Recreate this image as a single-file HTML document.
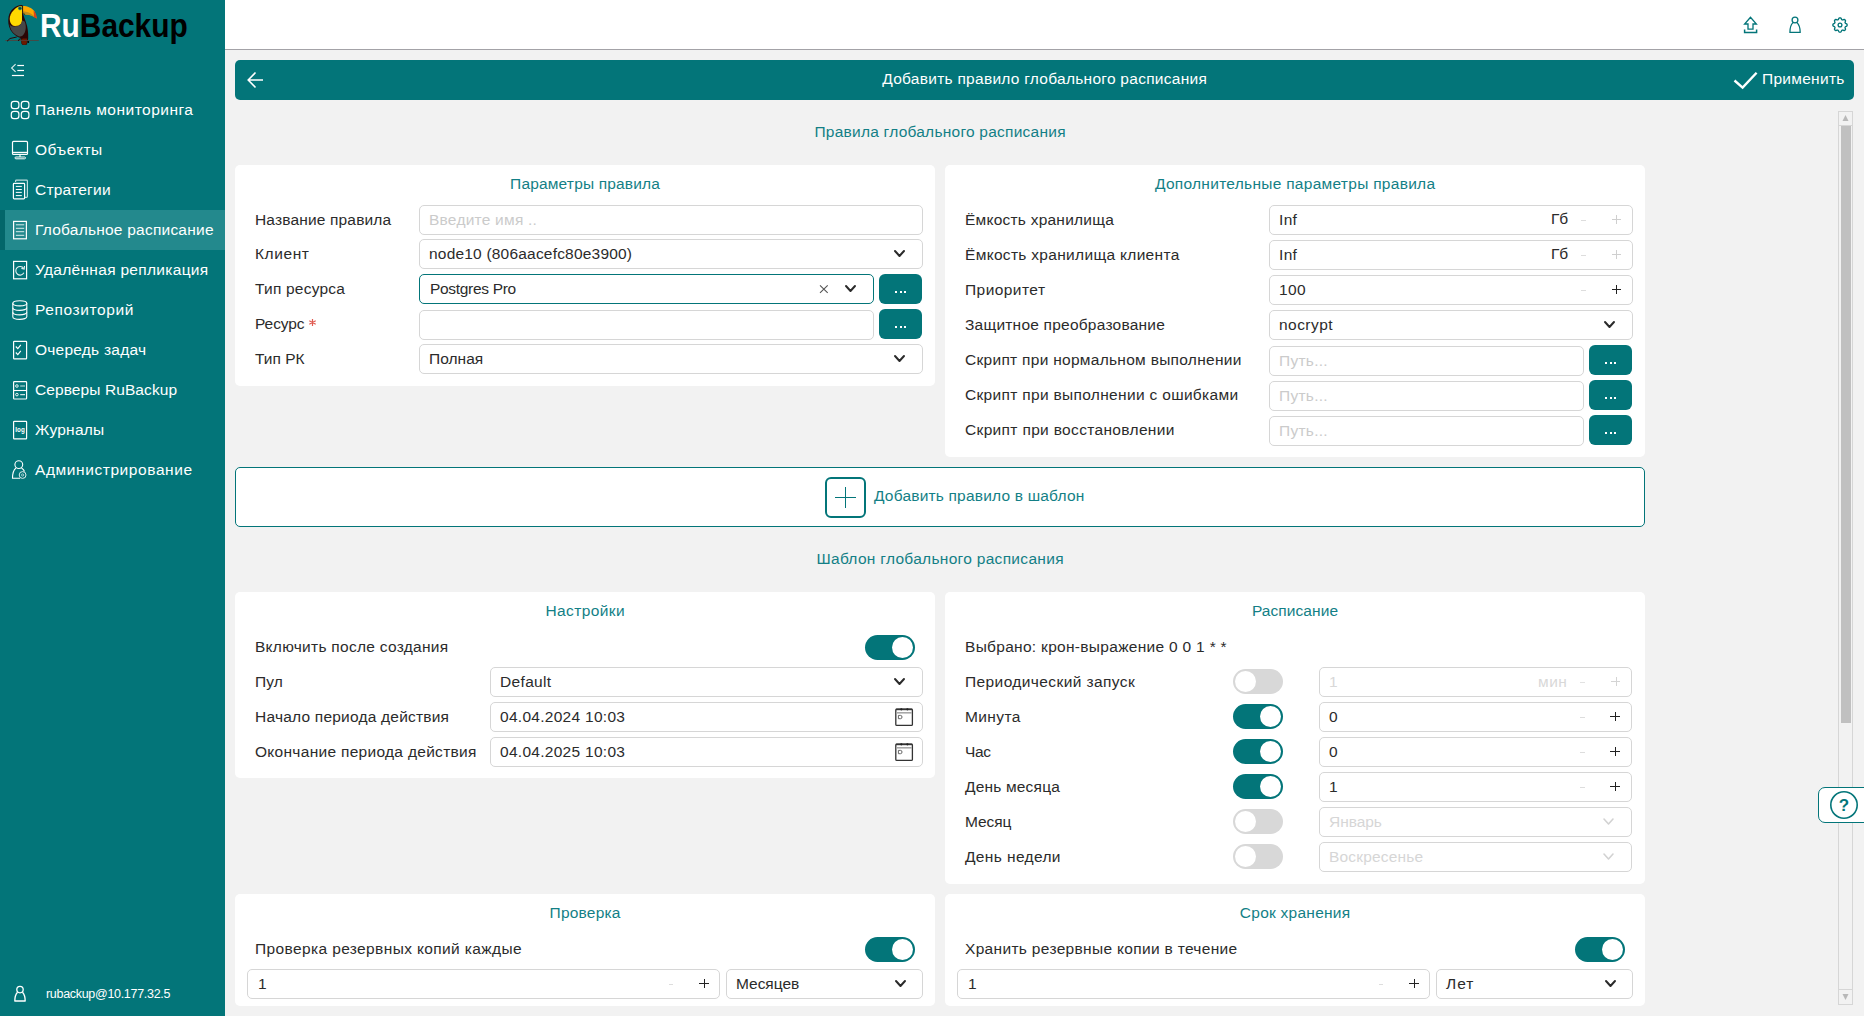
<!DOCTYPE html><html><head><meta charset="utf-8"><style>
html,body{margin:0;padding:0;width:1864px;height:1016px;overflow:hidden;background:#f2f2f2;font-family:"Liberation Sans",sans-serif}
.t{position:absolute;white-space:nowrap;line-height:30px;height:30px}
.b{position:absolute;box-sizing:border-box}
svg.b{overflow:visible}
</style></head><body>
<div class="b" style="left:225px;top:0px;width:1639px;height:49px;background:#fff;border-radius:0px;"></div>
<div class="b" style="left:225px;top:49px;width:1639px;height:1px;background:#a3a2a7;border-radius:0px;"></div>
<div class="b" style="left:0px;top:0px;width:225px;height:1016px;background:#037579;border-radius:0px;"></div>
<div class="b" style="left:5px;top:210px;width:220px;height:40px;background:#23898d;border-radius:0px;"></div>
<div class="b" style="left:0px;top:210px;width:5px;height:40px;background:#03666a;border-radius:0px;"></div>
<div class="t" style="left:35.00px;top:94.90px;font-size:15.5px;letter-spacing:0.482px;color:#ffffff;">Панель мониторинга</div>
<div class="t" style="left:35.00px;top:134.90px;font-size:15.5px;letter-spacing:0.557px;color:#ffffff;">Объекты</div>
<div class="t" style="left:35.00px;top:174.90px;font-size:15.5px;letter-spacing:0.229px;color:#ffffff;">Стратегии</div>
<div class="t" style="left:35.00px;top:214.90px;font-size:15.5px;letter-spacing:0.226px;color:#ffffff;">Глобальное расписание</div>
<div class="t" style="left:35.00px;top:254.90px;font-size:15.5px;letter-spacing:0.303px;color:#ffffff;">Удалённая репликация</div>
<div class="t" style="left:35.00px;top:294.90px;font-size:15.5px;letter-spacing:0.605px;color:#ffffff;">Репозиторий</div>
<div class="t" style="left:35.00px;top:334.90px;font-size:15.5px;letter-spacing:0.234px;color:#ffffff;">Очередь задач</div>
<div class="t" style="left:35.00px;top:374.90px;font-size:15.5px;letter-spacing:0.092px;color:#ffffff;">Серверы RuBackup</div>
<div class="t" style="left:35.00px;top:414.90px;font-size:15.5px;letter-spacing:0.252px;color:#ffffff;">Журналы</div>
<div class="t" style="left:35.00px;top:454.90px;font-size:15.5px;letter-spacing:0.580px;color:#ffffff;">Администрирование</div>
<div class="t" style="left:46.00px;top:979.00px;font-size:12.5px;letter-spacing:-0.302px;color:#ffffff;">rubackup@10.177.32.5</div>
<div class="t" style="left:40px;top:6px;height:40px;line-height:40px;font-size:33px;font-weight:bold;letter-spacing:0px;color:#fff;transform:scaleX(0.905);transform-origin:0 0">Ru<span style="color:#000">Backup</span></div>
<div class="b" style="left:235px;top:60px;width:1619px;height:40px;background:#037579;border-radius:5px;"></div>
<div class="t" style="left:882.19px;top:63.50px;font-size:15.5px;letter-spacing:0.271px;color:#fff;">Добавить правило глобального расписания</div>
<div class="t" style="left:1762.00px;top:63.50px;font-size:15.5px;letter-spacing:0.282px;color:#fff;">Применить</div>
<div class="t" style="left:814.45px;top:117.00px;font-size:15.5px;letter-spacing:0.242px;color:#137f86;">Правила глобального расписания</div>
<div class="b" style="left:235px;top:165px;width:700px;height:221px;background:#fff;border-radius:5px;"></div>
<div class="b" style="left:945px;top:165px;width:700px;height:292px;background:#fff;border-radius:5px;"></div>
<div class="t" style="left:510.10px;top:168.80px;font-size:15.5px;letter-spacing:0.168px;color:#137f86;">Параметры правила</div>
<div class="t" style="left:1154.96px;top:168.80px;font-size:15.5px;letter-spacing:0.281px;color:#137f86;">Дополнительные параметры правила</div>
<div class="t" style="left:255.00px;top:204.50px;font-size:15.5px;letter-spacing:0.162px;color:#2b2b2b;">Название правила</div>
<div class="t" style="left:255.00px;top:238.50px;font-size:15.5px;letter-spacing:0.580px;color:#2b2b2b;">Клиент</div>
<div class="t" style="left:255.00px;top:273.50px;font-size:15.5px;letter-spacing:0.221px;color:#2b2b2b;">Тип ресурса</div>
<div class="t" style="left:255.00px;top:308.50px;font-size:15.5px;letter-spacing:-0.070px;color:#2b2b2b;">Ресурс</div>
<div class="t" style="left:255.00px;top:343.50px;font-size:15.5px;letter-spacing:0.022px;color:#2b2b2b;">Тип РК</div>
<svg class="b" style="left:306px;top:316px" width="14" height="14" viewBox="306 316 14 14"><path d="M312.5 319 V326 M309.3 320.8 L315.7 324.2 M315.7 320.8 L309.3 324.2" stroke="#e05a50" stroke-width="1.2"/></svg>
<div class="b" style="left:419px;top:205px;width:504px;height:30px;background:#fff;border:1px solid #d6d6d6;border-radius:5px;"></div>
<div class="t" style="left:429.00px;top:204.50px;font-size:15.5px;letter-spacing:0.235px;color:#cbcbcb;">Введите имя ..</div>
<div class="b" style="left:419px;top:239px;width:504px;height:30px;background:#fff;border:1px solid #d6d6d6;border-radius:5px;"></div>
<div class="t" style="left:429.00px;top:238.50px;font-size:15.5px;letter-spacing:0.200px;color:#2b2b2b;">node10 (806aacefc80e3900)</div>
<svg class="b" style="left:893.0px;top:248.6px" width="13" height="9" viewBox="-1 -1 13 9"><path d="M1 1 L5.5 6 L10 1" fill="none" stroke="#2b2b2b" stroke-width="2" stroke-linecap="round" stroke-linejoin="round"/></svg>
<div class="b" style="left:419px;top:274px;width:455px;height:30px;background:#fff;border:1px solid #037579;border-radius:5px;"></div>
<div class="t" style="left:430.00px;top:273.50px;font-size:15.5px;letter-spacing:-0.312px;color:#2b2b2b;">Postgres Pro</div>
<svg class="b" style="left:843.5px;top:284.1px" width="13" height="9" viewBox="-1 -1 13 9"><path d="M1 1 L5.5 6 L10 1" fill="none" stroke="#2b2b2b" stroke-width="2" stroke-linecap="round" stroke-linejoin="round"/></svg>
<div class="b" style="left:879px;top:274px;width:43px;height:30px;background:#037579;border-radius:6px;"></div>
<div class="b" style="left:895.1px;top:291.0px;width:2px;height:2px;background:#fff"></div>
<div class="b" style="left:899.5px;top:291.0px;width:2px;height:2px;background:#fff"></div>
<div class="b" style="left:903.9px;top:291.0px;width:2px;height:2px;background:#fff"></div>
<div class="b" style="left:419px;top:310px;width:455px;height:30px;background:#fff;border:1px solid #d6d6d6;border-radius:5px;"></div>
<div class="b" style="left:879px;top:309px;width:43px;height:30px;background:#037579;border-radius:6px;"></div>
<div class="b" style="left:895.1px;top:326.0px;width:2px;height:2px;background:#fff"></div>
<div class="b" style="left:899.5px;top:326.0px;width:2px;height:2px;background:#fff"></div>
<div class="b" style="left:903.9px;top:326.0px;width:2px;height:2px;background:#fff"></div>
<div class="b" style="left:419px;top:344px;width:504px;height:30px;background:#fff;border:1px solid #d6d6d6;border-radius:5px;"></div>
<div class="t" style="left:429.00px;top:343.50px;font-size:15.5px;letter-spacing:0.034px;color:#2b2b2b;">Полная</div>
<svg class="b" style="left:893.0px;top:353.6px" width="13" height="9" viewBox="-1 -1 13 9"><path d="M1 1 L5.5 6 L10 1" fill="none" stroke="#2b2b2b" stroke-width="2" stroke-linecap="round" stroke-linejoin="round"/></svg>
<div class="t" style="left:965.00px;top:204.50px;font-size:15.5px;letter-spacing:0.232px;color:#2b2b2b;">Ёмкость хранилища</div>
<div class="t" style="left:965.00px;top:239.50px;font-size:15.5px;letter-spacing:0.312px;color:#2b2b2b;">Ёмкость хранилища клиента</div>
<div class="t" style="left:965.00px;top:274.50px;font-size:15.5px;letter-spacing:0.443px;color:#2b2b2b;">Приоритет</div>
<div class="t" style="left:965.00px;top:309.50px;font-size:15.5px;letter-spacing:0.224px;color:#2b2b2b;">Защитное преобразование</div>
<div class="t" style="left:965.00px;top:344.50px;font-size:15.5px;letter-spacing:0.285px;color:#2b2b2b;">Скрипт при нормальном выполнении</div>
<div class="t" style="left:965.00px;top:379.50px;font-size:15.5px;letter-spacing:0.319px;color:#2b2b2b;">Скрипт при выполнении с ошибками</div>
<div class="t" style="left:965.00px;top:414.50px;font-size:15.5px;letter-spacing:0.336px;color:#2b2b2b;">Скрипт при восстановлении</div>
<div class="b" style="left:1269px;top:205px;width:364px;height:30px;background:#fff;border:1px solid #d6d6d6;border-radius:5px;"></div>
<div class="t" style="left:1279.00px;top:204.50px;font-size:15.5px;letter-spacing:0.345px;color:#2b2b2b;">Inf</div>
<div class="t" style="left:1551.00px;top:204.00px;font-size:15.5px;letter-spacing:-0.101px;color:#2b2b2b;">Гб</div>
<div class="b" style="left:1581.3px;top:220px;width:4.4px;height:1px;background:#dddddd"></div>
<div class="b" style="left:1611.7px;top:219px;width:9.6px;height:1px;background:#cfcfcf"></div>
<div class="b" style="left:1615.5px;top:214.8px;width:1px;height:9.4px;background:#cfcfcf"></div>
<div class="b" style="left:1269px;top:240px;width:364px;height:30px;background:#fff;border:1px solid #d6d6d6;border-radius:5px;"></div>
<div class="t" style="left:1279.00px;top:239.50px;font-size:15.5px;letter-spacing:0.345px;color:#2b2b2b;">Inf</div>
<div class="t" style="left:1551.00px;top:239.00px;font-size:15.5px;letter-spacing:-0.101px;color:#2b2b2b;">Гб</div>
<div class="b" style="left:1581.3px;top:255px;width:4.4px;height:1px;background:#dddddd"></div>
<div class="b" style="left:1611.7px;top:254px;width:9.6px;height:1px;background:#cfcfcf"></div>
<div class="b" style="left:1615.5px;top:249.8px;width:1px;height:9.4px;background:#cfcfcf"></div>
<div class="b" style="left:1269px;top:275px;width:364px;height:30px;background:#fff;border:1px solid #d6d6d6;border-radius:5px;"></div>
<div class="t" style="left:1279.00px;top:274.50px;font-size:15.5px;letter-spacing:0.430px;color:#2b2b2b;">100</div>
<div class="b" style="left:1581.3px;top:290px;width:4.4px;height:1px;background:#dddddd"></div>
<div class="b" style="left:1611.7px;top:289px;width:9.6px;height:1px;background:#222"></div>
<div class="b" style="left:1615.5px;top:284.8px;width:1px;height:9.4px;background:#222"></div>
<div class="b" style="left:1269px;top:310px;width:364px;height:30px;background:#fff;border:1px solid #d6d6d6;border-radius:5px;"></div>
<div class="t" style="left:1279.00px;top:309.50px;font-size:15.5px;letter-spacing:0.454px;color:#2b2b2b;">nocrypt</div>
<svg class="b" style="left:1603.0px;top:319.6px" width="13" height="9" viewBox="-1 -1 13 9"><path d="M1 1 L5.5 6 L10 1" fill="none" stroke="#2b2b2b" stroke-width="2" stroke-linecap="round" stroke-linejoin="round"/></svg>
<div class="b" style="left:1269px;top:346px;width:315px;height:30px;background:#fff;border:1px solid #d6d6d6;border-radius:5px;"></div>
<div class="t" style="left:1279.00px;top:345.50px;font-size:15.5px;letter-spacing:0.266px;color:#cbcbcb;">Путь...</div>
<div class="b" style="left:1589px;top:345px;width:43px;height:30px;background:#037579;border-radius:6px;"></div>
<div class="b" style="left:1605.1px;top:362.0px;width:2px;height:2px;background:#fff"></div>
<div class="b" style="left:1609.5px;top:362.0px;width:2px;height:2px;background:#fff"></div>
<div class="b" style="left:1613.9px;top:362.0px;width:2px;height:2px;background:#fff"></div>
<div class="b" style="left:1269px;top:381px;width:315px;height:30px;background:#fff;border:1px solid #d6d6d6;border-radius:5px;"></div>
<div class="t" style="left:1279.00px;top:380.50px;font-size:15.5px;letter-spacing:0.266px;color:#cbcbcb;">Путь...</div>
<div class="b" style="left:1589px;top:380px;width:43px;height:30px;background:#037579;border-radius:6px;"></div>
<div class="b" style="left:1605.1px;top:397.0px;width:2px;height:2px;background:#fff"></div>
<div class="b" style="left:1609.5px;top:397.0px;width:2px;height:2px;background:#fff"></div>
<div class="b" style="left:1613.9px;top:397.0px;width:2px;height:2px;background:#fff"></div>
<div class="b" style="left:1269px;top:416px;width:315px;height:30px;background:#fff;border:1px solid #d6d6d6;border-radius:5px;"></div>
<div class="t" style="left:1279.00px;top:415.50px;font-size:15.5px;letter-spacing:0.266px;color:#cbcbcb;">Путь...</div>
<div class="b" style="left:1589px;top:415px;width:43px;height:30px;background:#037579;border-radius:6px;"></div>
<div class="b" style="left:1605.1px;top:432.0px;width:2px;height:2px;background:#fff"></div>
<div class="b" style="left:1609.5px;top:432.0px;width:2px;height:2px;background:#fff"></div>
<div class="b" style="left:1613.9px;top:432.0px;width:2px;height:2px;background:#fff"></div>
<div class="b" style="left:235px;top:467px;width:1410px;height:60px;background:#fff;border:1px solid #037579;border-radius:5px;border-width:1px;"></div>
<div class="b" style="left:825px;top:477px;width:41px;height:41px;background:#fff;border:1px solid #037579;border-radius:6px;border-width:2px;"></div>
<div class="b" style="left:835px;top:496.6px;width:21px;height:1.2px;background:#037579"></div>
<div class="b" style="left:845px;top:487px;width:1.1px;height:20.6px;background:#037579"></div>
<div class="t" style="left:874.00px;top:481.00px;font-size:15.5px;letter-spacing:0.192px;color:#137f86;">Добавить правило в шаблон</div>
<div class="t" style="left:816.46px;top:544.00px;font-size:15.5px;letter-spacing:0.304px;color:#137f86;">Шаблон глобального расписания</div>
<div class="b" style="left:235px;top:592px;width:700px;height:186px;background:#fff;border-radius:5px;"></div>
<div class="t" style="left:545.47px;top:595.80px;font-size:15.5px;letter-spacing:0.383px;color:#137f86;">Настройки</div>
<div class="t" style="left:255.00px;top:631.50px;font-size:15.5px;letter-spacing:0.278px;color:#2b2b2b;">Включить после создания</div>
<div class="b" style="left:865px;top:635px;width:50px;height:25px;border-radius:13px;background:#037579"></div>
<div class="b" style="left:892px;top:637px;width:21px;height:21px;border-radius:50%;background:#fff"></div>
<div class="t" style="left:255.00px;top:666.50px;font-size:15.5px;letter-spacing:0.087px;color:#2b2b2b;">Пул</div>
<div class="b" style="left:490px;top:667px;width:433px;height:30px;background:#fff;border:1px solid #d6d6d6;border-radius:5px;"></div>
<div class="t" style="left:500.00px;top:666.50px;font-size:15.5px;letter-spacing:0.339px;color:#2b2b2b;">Default</div>
<div class="t" style="left:255.00px;top:701.50px;font-size:15.5px;letter-spacing:0.212px;color:#2b2b2b;">Начало периода действия</div>
<div class="b" style="left:490px;top:702px;width:433px;height:30px;background:#fff;border:1px solid #d6d6d6;border-radius:5px;"></div>
<div class="t" style="left:500.00px;top:701.50px;font-size:15.5px;letter-spacing:0.286px;color:#2b2b2b;">04.04.2024 10:03</div>
<div class="t" style="left:255.00px;top:736.50px;font-size:15.5px;letter-spacing:0.295px;color:#2b2b2b;">Окончание периода действия</div>
<div class="b" style="left:490px;top:737px;width:433px;height:30px;background:#fff;border:1px solid #d6d6d6;border-radius:5px;"></div>
<div class="t" style="left:500.00px;top:736.50px;font-size:15.5px;letter-spacing:0.286px;color:#2b2b2b;">04.04.2025 10:03</div>
<svg class="b" style="left:893.0px;top:676.6px" width="13" height="9" viewBox="-1 -1 13 9"><path d="M1 1 L5.5 6 L10 1" fill="none" stroke="#2b2b2b" stroke-width="2" stroke-linecap="round" stroke-linejoin="round"/></svg>
<svg class="b" style="left:894px;top:708px" width="20" height="20" viewBox="0 0 20 20"><rect x="1.8" y="1.2" width="16.6" height="16.2" rx="1" fill="none" stroke="#333" stroke-width="1.3"/><line x1="1.8" y1="1.4" x2="18.4" y2="1.4" stroke="#333" stroke-width="1.6"/><circle cx="7.3" cy="1.3" r="1.1" fill="#222"/><circle cx="13.4" cy="1.3" r="1.1" fill="#222"/><line x1="2.4" y1="4.8" x2="17.8" y2="4.8" stroke="#a8a8a8" stroke-width="1.6"/><path d="M4.4 7.4 H6.6 Q8 7.4 8 9 Q8 10.7 6.6 10.7 H4.4 Z" fill="none" stroke="#666" stroke-width="1"/></svg>
<svg class="b" style="left:894px;top:743px" width="20" height="20" viewBox="0 0 20 20"><rect x="1.8" y="1.2" width="16.6" height="16.2" rx="1" fill="none" stroke="#333" stroke-width="1.3"/><line x1="1.8" y1="1.4" x2="18.4" y2="1.4" stroke="#333" stroke-width="1.6"/><circle cx="7.3" cy="1.3" r="1.1" fill="#222"/><circle cx="13.4" cy="1.3" r="1.1" fill="#222"/><line x1="2.4" y1="4.8" x2="17.8" y2="4.8" stroke="#a8a8a8" stroke-width="1.6"/><path d="M4.4 7.4 H6.6 Q8 7.4 8 9 Q8 10.7 6.6 10.7 H4.4 Z" fill="none" stroke="#666" stroke-width="1"/></svg>
<div class="b" style="left:945px;top:592px;width:700px;height:292px;background:#fff;border-radius:5px;"></div>
<div class="t" style="left:1251.95px;top:595.80px;font-size:15.5px;letter-spacing:0.073px;color:#137f86;">Расписание</div>
<div class="t" style="left:965.00px;top:631.50px;font-size:15.5px;letter-spacing:0.299px;color:#2b2b2b;">Выбрано: крон-выражение 0 0 1 * *</div>
<div class="t" style="left:965.00px;top:666.50px;font-size:15.5px;letter-spacing:0.403px;color:#2b2b2b;">Периодический запуск</div>
<div class="b" style="left:1233px;top:669px;width:50px;height:25px;border-radius:13px;background:#d8d8d8"></div>
<div class="b" style="left:1235px;top:671px;width:21px;height:21px;border-radius:50%;background:#fff"></div>
<div class="b" style="left:1319px;top:667px;width:313px;height:30px;background:#fff;border:1px solid #d6d6d6;border-radius:5px;"></div>
<div class="t" style="left:965.00px;top:701.50px;font-size:15.5px;letter-spacing:0.384px;color:#2b2b2b;">Минута</div>
<div class="b" style="left:1233px;top:704px;width:50px;height:25px;border-radius:13px;background:#037579"></div>
<div class="b" style="left:1260px;top:706px;width:21px;height:21px;border-radius:50%;background:#fff"></div>
<div class="b" style="left:1319px;top:702px;width:313px;height:30px;background:#fff;border:1px solid #d6d6d6;border-radius:5px;"></div>
<div class="t" style="left:965.00px;top:736.50px;font-size:15.5px;letter-spacing:-0.413px;color:#2b2b2b;">Час</div>
<div class="b" style="left:1233px;top:739px;width:50px;height:25px;border-radius:13px;background:#037579"></div>
<div class="b" style="left:1260px;top:741px;width:21px;height:21px;border-radius:50%;background:#fff"></div>
<div class="b" style="left:1319px;top:737px;width:313px;height:30px;background:#fff;border:1px solid #d6d6d6;border-radius:5px;"></div>
<div class="t" style="left:965.00px;top:771.50px;font-size:15.5px;letter-spacing:0.184px;color:#2b2b2b;">День месяца</div>
<div class="b" style="left:1233px;top:774px;width:50px;height:25px;border-radius:13px;background:#037579"></div>
<div class="b" style="left:1260px;top:776px;width:21px;height:21px;border-radius:50%;background:#fff"></div>
<div class="b" style="left:1319px;top:772px;width:313px;height:30px;background:#fff;border:1px solid #d6d6d6;border-radius:5px;"></div>
<div class="t" style="left:965.00px;top:806.50px;font-size:15.5px;letter-spacing:-0.096px;color:#2b2b2b;">Месяц</div>
<div class="b" style="left:1233px;top:809px;width:50px;height:25px;border-radius:13px;background:#d8d8d8"></div>
<div class="b" style="left:1235px;top:811px;width:21px;height:21px;border-radius:50%;background:#fff"></div>
<div class="b" style="left:1319px;top:807px;width:313px;height:30px;background:#fff;border:1px solid #d6d6d6;border-radius:5px;"></div>
<div class="t" style="left:965.00px;top:841.50px;font-size:15.5px;letter-spacing:0.377px;color:#2b2b2b;">День недели</div>
<div class="b" style="left:1233px;top:844px;width:50px;height:25px;border-radius:13px;background:#d8d8d8"></div>
<div class="b" style="left:1235px;top:846px;width:21px;height:21px;border-radius:50%;background:#fff"></div>
<div class="b" style="left:1319px;top:842px;width:313px;height:30px;background:#fff;border:1px solid #d6d6d6;border-radius:5px;"></div>
<div class="t" style="left:1329.00px;top:666.50px;font-size:15.5px;letter-spacing:0.000px;color:#d8d8d8;">1</div>
<div class="t" style="left:1538.00px;top:666.50px;font-size:15.5px;letter-spacing:0.470px;color:#d8d8d8;">мин</div>
<div class="b" style="left:1580.3px;top:682px;width:4.4px;height:1px;background:#e2e2e2"></div>
<div class="b" style="left:1610.7px;top:681px;width:9.6px;height:1px;background:#d4d4d4"></div>
<div class="b" style="left:1615.5px;top:676.8px;width:1px;height:9.4px;background:#d4d4d4"></div>
<div class="t" style="left:1329.00px;top:701.50px;font-size:15.5px;letter-spacing:0.000px;color:#2b2b2b;">0</div>
<div class="b" style="left:1580.3px;top:717px;width:4.4px;height:1px;background:#dddddd"></div>
<div class="b" style="left:1610.2px;top:716px;width:9.6px;height:1px;background:#222"></div>
<div class="b" style="left:1614.5px;top:711.8px;width:1px;height:9.4px;background:#222"></div>
<div class="t" style="left:1329.00px;top:736.50px;font-size:15.5px;letter-spacing:0.000px;color:#2b2b2b;">0</div>
<div class="b" style="left:1580.3px;top:752px;width:4.4px;height:1px;background:#dddddd"></div>
<div class="b" style="left:1610.2px;top:751px;width:9.6px;height:1px;background:#222"></div>
<div class="b" style="left:1614.5px;top:746.8px;width:1px;height:9.4px;background:#222"></div>
<div class="t" style="left:1329.00px;top:771.50px;font-size:15.5px;letter-spacing:0.000px;color:#2b2b2b;">1</div>
<div class="b" style="left:1580.3px;top:787px;width:4.4px;height:1px;background:#dddddd"></div>
<div class="b" style="left:1610.2px;top:786px;width:9.6px;height:1px;background:#222"></div>
<div class="b" style="left:1614.5px;top:781.8px;width:1px;height:9.4px;background:#222"></div>
<div class="t" style="left:1329.00px;top:806.50px;font-size:15.5px;letter-spacing:-0.053px;color:#d6d6d6;">Январь</div>
<svg class="b" style="left:1602.0px;top:816.6px" width="13" height="9" viewBox="-1 -1 13 9"><path d="M1 1 L5.5 6 L10 1" fill="none" stroke="#d2d2d2" stroke-width="1.6" stroke-linecap="round" stroke-linejoin="round"/></svg>
<div class="t" style="left:1329.00px;top:841.50px;font-size:15.5px;letter-spacing:0.181px;color:#d6d6d6;">Воскресенье</div>
<svg class="b" style="left:1602.0px;top:851.6px" width="13" height="9" viewBox="-1 -1 13 9"><path d="M1 1 L5.5 6 L10 1" fill="none" stroke="#d2d2d2" stroke-width="1.6" stroke-linecap="round" stroke-linejoin="round"/></svg>
<div class="b" style="left:235px;top:894px;width:700px;height:112px;background:#fff;border-radius:5px;"></div>
<div class="t" style="left:549.62px;top:897.80px;font-size:15.5px;letter-spacing:0.192px;color:#137f86;">Проверка</div>
<div class="t" style="left:255.00px;top:933.50px;font-size:15.5px;letter-spacing:0.378px;color:#2b2b2b;">Проверка резервных копий каждые</div>
<div class="b" style="left:865px;top:937px;width:50px;height:25px;border-radius:13px;background:#037579"></div>
<div class="b" style="left:892px;top:939px;width:21px;height:21px;border-radius:50%;background:#fff"></div>
<div class="b" style="left:247px;top:969px;width:473px;height:30px;background:#fff;border:1px solid #d6d6d6;border-radius:5px;"></div>
<div class="t" style="left:258.00px;top:968.50px;font-size:15.5px;letter-spacing:0.000px;color:#2b2b2b;">1</div>
<div class="b" style="left:668.8px;top:984px;width:4.4px;height:1px;background:#dddddd"></div>
<div class="b" style="left:699.2px;top:983px;width:9.6px;height:1px;background:#222"></div>
<div class="b" style="left:703.5px;top:978.8px;width:1px;height:9.4px;background:#222"></div>
<div class="b" style="left:726px;top:969px;width:197px;height:30px;background:#fff;border:1px solid #d6d6d6;border-radius:5px;"></div>
<div class="t" style="left:736.00px;top:968.50px;font-size:15.5px;letter-spacing:-0.034px;color:#2b2b2b;">Месяцев</div>
<svg class="b" style="left:894.0px;top:978.6px" width="13" height="9" viewBox="-1 -1 13 9"><path d="M1 1 L5.5 6 L10 1" fill="none" stroke="#2b2b2b" stroke-width="2" stroke-linecap="round" stroke-linejoin="round"/></svg>
<div class="b" style="left:945px;top:894px;width:700px;height:112px;background:#fff;border-radius:5px;"></div>
<div class="t" style="left:1239.84px;top:897.80px;font-size:15.5px;letter-spacing:0.252px;color:#137f86;">Срок хранения</div>
<div class="t" style="left:965.00px;top:933.50px;font-size:15.5px;letter-spacing:0.320px;color:#2b2b2b;">Хранить резервные копии в течение</div>
<div class="b" style="left:1575px;top:937px;width:50px;height:25px;border-radius:13px;background:#037579"></div>
<div class="b" style="left:1602px;top:939px;width:21px;height:21px;border-radius:50%;background:#fff"></div>
<div class="b" style="left:957px;top:969px;width:473px;height:30px;background:#fff;border:1px solid #d6d6d6;border-radius:5px;"></div>
<div class="t" style="left:968.00px;top:968.50px;font-size:15.5px;letter-spacing:0.000px;color:#2b2b2b;">1</div>
<div class="b" style="left:1378.8px;top:984px;width:4.4px;height:1px;background:#dddddd"></div>
<div class="b" style="left:1409.2px;top:983px;width:9.6px;height:1px;background:#222"></div>
<div class="b" style="left:1413.5px;top:978.8px;width:1px;height:9.4px;background:#222"></div>
<div class="b" style="left:1436px;top:969px;width:197px;height:30px;background:#fff;border:1px solid #d6d6d6;border-radius:5px;"></div>
<div class="t" style="left:1446.00px;top:968.50px;font-size:15.5px;letter-spacing:0.960px;color:#2b2b2b;">Лет</div>
<svg class="b" style="left:1604.0px;top:978.6px" width="13" height="9" viewBox="-1 -1 13 9"><path d="M1 1 L5.5 6 L10 1" fill="none" stroke="#2b2b2b" stroke-width="2" stroke-linecap="round" stroke-linejoin="round"/></svg>
<div class="b" style="left:1838px;top:111px;width:15px;height:894px;background:#f2f2f2;border:1px solid #d6d6d6;border-radius:0px;"></div>
<div class="b" style="left:1841px;top:126px;width:10px;height:597px;background:#c0c0c0;border-radius:0px;"></div>
<div class="b" style="left:1838px;top:125px;width:15px;height:1px;background:#d6d6d6;border-radius:0px;"></div>
<div class="b" style="left:1838px;top:989px;width:15px;height:1px;background:#d6d6d6;border-radius:0px;"></div>
<svg class="b" style="left:1838px;top:111px" width="15" height="15"><path d="M4.5 10 L7.5 4 L10.5 10 Z" fill="#b8b8b8"/></svg>
<svg class="b" style="left:1838px;top:990px" width="15" height="15"><path d="M4.5 4 L7.5 10 L10.5 4 Z" fill="#b8b8b8"/></svg>
<div class="b" style="left:1818px;top:787px;width:62px;height:36px;background:#fff;border:1px solid #037579;border-radius:7px;border-width:1.5px;"></div>
<svg class="b" style="left:1829px;top:790px" width="30" height="30" viewBox="0 0 30 30"><circle cx="15" cy="15" r="13.2" fill="none" stroke="#037579" stroke-width="1.6"/><text x="15" y="21" text-anchor="middle" font-family="Liberation Sans" font-weight="bold" font-size="17" fill="#037579">?</text></svg>
<svg class="b" style="left:0px;top:0px" width="44" height="50" viewBox="0 0 44 50"><path d="M21.5 5 C15.5 5.2 10 10 8.6 16.5 C7.8 21 8.3 26 10.5 30 C12.8 34 16.5 36.8 21.2 38.2 L21.4 43.5 Q22 45.2 24.5 45 L27 44.5 L28.2 38.6 C28.4 33 27.8 27 26 22.5 L22.5 12.5 L22.6 5.2 Z" fill="#2a0606"/><path d="M21.3 6 C16.5 6.5 11.5 11 10 16.5 C9.2 20 10.2 24 13 25.4 C15.5 26.5 19 25.7 20.8 24 C21.8 23 22 21.5 22 20 L22 7 Z" fill="#ffd900"/><path d="M11 23.8 C12.5 25.6 15.5 26.2 18 25.8 C19.5 25.5 20.5 25 21.2 24.2 C20 25.6 18 26.3 15.5 26.2 C13 26 11.5 25 11 23.8 Z" fill="#f2a900"/><path d="M9.6 24.5 C10 28.5 12 31.8 14.8 34 C16.6 35.6 18.6 36.5 20.2 36.6 C23.5 36.2 25.8 32 25.8 27 C25.8 24.5 25.3 22.8 24.6 21.6 L22 20.2 C21.8 23.5 19.8 26.2 16 26.5 C12.8 26.8 10.5 26 9.6 24.5 Z" fill="#474747"/><path d="M22.7 6 C27.5 6 32 8 34.3 11 L36.8 18.4 C33 15.5 28.5 14 24.5 14.6 L22.7 12.5 Z" fill="#ffaa00"/><path d="M22.8 11.2 C27 11.4 31 13 34 16 L34.3 17.3 C30.6 14.9 27.2 14 24.5 14.6 L22.8 12.6 Z" fill="#c48d1a"/><path d="M33.6 10.6 C35.3 12.2 36.6 14.5 36.9 18.6 L34 17.3 Z" fill="#d9441c"/><path d="M22.6 5.8 V12.8 M23.4 13.2 L25.2 14.8" stroke="#1a0800" stroke-width="0.8" fill="none"/><circle cx="20" cy="8.3" r="1.6" fill="#0a4040" stroke="#0a8a8a" stroke-width="0.6"/><path d="M21.4 38.4 L27.2 38.4 L26.8 43 Q26 45 24 44.9 Q22 44.7 21.6 43 Z" fill="#6a1800"/><circle cx="28.3" cy="42" r="0.9" fill="#000"/><line x1="5.3" y1="40.5" x2="38.8" y2="40.5" stroke="#55403a" stroke-width="0.8"/><path d="M7 41.3 L10 38.5 L16.8 37 M18.3 41 L19.5 39 L22.5 38.6" stroke="#2a0606" stroke-width="1" fill="none"/></svg>
<svg class="b" style="left:10px;top:62px" width="16" height="16" viewBox="0 0 16 16"><path d="M5.6 2.2 L1.6 6 L5.6 9.8" fill="none" stroke="#dfeeee" stroke-width="1.1"/><line x1="7.3" y1="3.5" x2="14" y2="3.5" stroke="#fff" stroke-width="1.2"/><line x1="7.3" y1="8.5" x2="14" y2="8.5" stroke="#fff" stroke-width="1.2"/><line x1="1.9" y1="13.5" x2="14" y2="13.5" stroke="#fff" stroke-width="1.2"/></svg>
<svg class="b" style="left:8px;top:98px" width="24" height="24" viewBox="8 98 24 24"><rect x="11.3" y="101.3" width="7.6" height="7.4" rx="2.6" fill="none" stroke="#fff" stroke-width="1.2"/><rect x="21.3" y="101.3" width="7.6" height="7.4" rx="2.6" fill="none" stroke="#fff" stroke-width="1.2"/><rect x="11.3" y="111.3" width="7.6" height="7.4" rx="2.6" fill="none" stroke="#fff" stroke-width="1.2"/><rect x="21.3" y="111.3" width="7.6" height="7.4" rx="2.6" fill="none" stroke="#fff" stroke-width="1.2"/></svg>
<svg class="b" style="left:10px;top:139px" width="20" height="22" viewBox="10 139 20 22"><rect x="12.5" y="141.4" width="15" height="13" rx="1" fill="none" stroke="#fff" stroke-width="1.2"/><line x1="12.5" y1="152.4" x2="27.5" y2="152.4" stroke="#fff" stroke-width="1.2"/><line x1="20" y1="155" x2="20" y2="157" stroke="#cfe" stroke-width="1.3"/><rect x="15" y="157" width="10.5" height="1.8" rx="0.9" fill="none" stroke="#fff" stroke-width="1"/></svg>
<svg class="b" style="left:10px;top:178px" width="22" height="24" viewBox="10 178 22 24"><path d="M15.6 182 L15.6 180.8 Q15.6 180.2 16.6 180.2 L26.6 180.2 Q27.4 180.2 27.4 181 L27.4 196.6 Q27.4 197.4 26.6 197.4 L25 197.4" fill="none" stroke="#bcdcdc" stroke-width="1.2"/><rect x="13.4" y="183.4" width="11.2" height="15.4" rx="0.8" fill="#04767b" stroke="#fff" stroke-width="1.2"/><path d="M15.8 186.4 H21.8 M15.8 189.5 H21.8 M15.8 192.4 H21.8 M15.8 195.6 H21.8" stroke="#fff" stroke-width="1"/></svg>
<svg class="b" style="left:10px;top:218px" width="22" height="24" viewBox="10 218 22 24"><rect x="13.6" y="221.4" width="12.8" height="17.4" fill="none" stroke="#fff" stroke-width="1.2"/><path d="M15.9 224.8 H24.2 M15.9 228.3 H24.2 M15.9 231.7 H24.2 M15.9 235.3 H24.2" stroke="#d7ecec" stroke-width="1"/></svg>
<svg class="b" style="left:10px;top:258px" width="22" height="24" viewBox="10 258 22 24"><rect x="13.6" y="261.4" width="13" height="17.4" fill="none" stroke="#fff" stroke-width="1.2"/><path d="M23.6 268.3 A4.3 4.3 0 1 0 23.9 272.8" fill="none" stroke="#e6f2f2" stroke-width="1.1"/><path d="M24.5 266 L24.2 269 L21.4 268.4" fill="none" stroke="#e6f2f2" stroke-width="1.1"/></svg>
<svg class="b" style="left:10px;top:298px" width="22" height="24" viewBox="10 298 22 24"><ellipse cx="19.8" cy="303.3" rx="7" ry="2.6" fill="none" stroke="#fff" stroke-width="1.1"/><path d="M12.8 303.3 V316.8 A7 2.6 0 0 0 26.8 316.8 V303.3" fill="none" stroke="#fff" stroke-width="1.1"/><path d="M12.8 307.8 A7 2.6 0 0 0 26.8 307.8 M12.8 312.3 A7 2.6 0 0 0 26.8 312.3" fill="none" stroke="#fff" stroke-width="1.1"/></svg>
<svg class="b" style="left:10px;top:338px" width="22" height="24" viewBox="10 338 22 24"><rect x="13.6" y="341.4" width="13" height="17.4" rx="0.6" fill="none" stroke="#fff" stroke-width="1.2"/><path d="M15.8 346.5 L17.8 348.6 L20.8 344.8 M15.8 352.5 L17.8 354.6 L20.8 350.8" fill="none" stroke="#fff" stroke-width="1.1"/></svg>
<svg class="b" style="left:10px;top:378px" width="22" height="24" viewBox="10 378 22 24"><rect x="13.6" y="381.6" width="13" height="17.4" rx="0.8" fill="none" stroke="#fff" stroke-width="1.2"/><line x1="13.6" y1="390.5" x2="26.6" y2="390.5" stroke="#fff" stroke-width="1.1"/><circle cx="16.9" cy="386" r="1.3" fill="none" stroke="#fff" stroke-width="0.9"/><circle cx="16.9" cy="394.6" r="1.3" fill="none" stroke="#fff" stroke-width="0.9"/><path d="M20.2 386 H25 M20.2 394.6 H25" stroke="#cfe6e6" stroke-width="1.2"/></svg>
<svg class="b" style="left:10px;top:418px" width="22" height="24" viewBox="10 418 22 24"><rect x="13.6" y="421.4" width="13" height="17.4" rx="0.6" fill="none" stroke="#fff" stroke-width="1.2"/><text x="20.1" y="432.3" text-anchor="middle" font-family="Liberation Sans" font-size="6.3" font-weight="bold" fill="#fff">log</text></svg>
<svg class="b" style="left:8px;top:458px" width="24" height="24" viewBox="8 458 24 24"><circle cx="18.8" cy="464.6" r="3.9" fill="none" stroke="#fff" stroke-width="1.1"/><path d="M16 468 C13.5 470 12.5 474 12.5 478.2 L20 478.2" fill="none" stroke="#fff" stroke-width="1.1"/><path d="M21.5 468 C23 469 24 470 24.5 471.5" fill="none" stroke="#fff" stroke-width="1.1"/><circle cx="22.6" cy="475" r="3.4" fill="none" stroke="#e0eeee" stroke-width="1"/><circle cx="22.6" cy="475" r="1.1" fill="none" stroke="#e0eeee" stroke-width="0.7"/></svg>
<svg class="b" style="left:10px;top:983px" width="22" height="22" viewBox="10 983 22 22"><circle cx="20" cy="989.6" r="3.2" fill="none" stroke="#fff" stroke-width="1.3"/><path d="M17.5 992.3 C15.5 994.5 14.8 997.5 14.8 1001 L25.2 1001 C25.2 997.5 24.5 994.5 22.5 992.3" fill="none" stroke="#fff" stroke-width="1.3" stroke-linejoin="round"/></svg>
<svg class="b" style="left:1740px;top:14px" width="22" height="22" viewBox="1740 14 22 22"><path d="M1750.5 17.3 L1744.6 24 H1748 V29.2 H1753 V24 H1756.4 Z" fill="none" stroke="#037579" stroke-width="1.3" stroke-linejoin="miter"/><path d="M1744.6 29.5 V32.6 H1756.6 V29.5" fill="none" stroke="#037579" stroke-width="1.5"/></svg>
<svg class="b" style="left:1785px;top:14px" width="22" height="22" viewBox="1785 14 22 22"><circle cx="1795" cy="20" r="2.9" fill="none" stroke="#037579" stroke-width="1.3"/><path d="M1793 22.6 C1791 24.5 1789.9 28.5 1789.9 32.4 L1800.2 32.4 C1800.2 28.5 1799 24.5 1797 22.6" fill="none" stroke="#037579" stroke-width="1.3" stroke-linejoin="round"/></svg>
<svg class="b" style="left:1828px;top:13px" width="24" height="24" viewBox="1828 13 24 24"><path d="M1847.10 25.00 L1847.09 25.28 L1847.08 25.56 L1846.96 25.82 L1846.66 26.05 L1846.33 26.26 L1845.99 26.44 L1845.67 26.60 L1845.40 26.76 L1845.30 26.96 L1845.22 27.16 L1845.13 27.37 L1845.06 27.58 L1845.14 27.88 L1845.25 28.22 L1845.36 28.58 L1845.46 28.96 L1845.50 29.34 L1845.40 29.61 L1845.21 29.82 L1845.02 30.02 L1844.82 30.21 L1844.61 30.40 L1844.34 30.50 L1843.96 30.46 L1843.58 30.36 L1843.22 30.25 L1842.88 30.14 L1842.58 30.06 L1842.37 30.13 L1842.16 30.22 L1841.96 30.30 L1841.76 30.40 L1841.60 30.67 L1841.44 30.99 L1841.26 31.33 L1841.05 31.66 L1840.82 31.96 L1840.56 32.08 L1840.28 32.09 L1840.00 32.10 L1839.72 32.09 L1839.44 32.08 L1839.18 31.96 L1838.95 31.66 L1838.74 31.33 L1838.56 30.99 L1838.40 30.67 L1838.24 30.40 L1838.04 30.30 L1837.84 30.22 L1837.63 30.13 L1837.42 30.06 L1837.12 30.14 L1836.78 30.25 L1836.42 30.36 L1836.04 30.46 L1835.66 30.50 L1835.39 30.40 L1835.18 30.21 L1834.98 30.02 L1834.79 29.82 L1834.60 29.61 L1834.50 29.34 L1834.54 28.96 L1834.64 28.58 L1834.75 28.22 L1834.86 27.88 L1834.94 27.58 L1834.87 27.37 L1834.78 27.16 L1834.70 26.96 L1834.60 26.76 L1834.33 26.60 L1834.01 26.44 L1833.67 26.26 L1833.34 26.05 L1833.04 25.82 L1832.92 25.56 L1832.91 25.28 L1832.90 25.00 L1832.91 24.72 L1832.92 24.44 L1833.04 24.18 L1833.34 23.95 L1833.67 23.74 L1834.01 23.56 L1834.33 23.40 L1834.60 23.24 L1834.70 23.04 L1834.78 22.84 L1834.87 22.63 L1834.94 22.42 L1834.86 22.12 L1834.75 21.78 L1834.64 21.42 L1834.54 21.04 L1834.50 20.66 L1834.60 20.39 L1834.79 20.18 L1834.98 19.98 L1835.18 19.79 L1835.39 19.60 L1835.66 19.50 L1836.04 19.54 L1836.42 19.64 L1836.78 19.75 L1837.12 19.86 L1837.42 19.94 L1837.63 19.87 L1837.84 19.78 L1838.04 19.70 L1838.24 19.60 L1838.40 19.33 L1838.56 19.01 L1838.74 18.67 L1838.95 18.34 L1839.18 18.04 L1839.44 17.92 L1839.72 17.91 L1840.00 17.90 L1840.28 17.91 L1840.56 17.92 L1840.82 18.04 L1841.05 18.34 L1841.26 18.67 L1841.44 19.01 L1841.60 19.33 L1841.76 19.60 L1841.96 19.70 L1842.16 19.78 L1842.37 19.87 L1842.58 19.94 L1842.88 19.86 L1843.22 19.75 L1843.58 19.64 L1843.96 19.54 L1844.34 19.50 L1844.61 19.60 L1844.82 19.79 L1845.02 19.98 L1845.21 20.18 L1845.40 20.39 L1845.50 20.66 L1845.46 21.04 L1845.36 21.42 L1845.25 21.78 L1845.14 22.12 L1845.06 22.42 L1845.13 22.63 L1845.22 22.84 L1845.30 23.04 L1845.40 23.24 L1845.67 23.40 L1845.99 23.56 L1846.33 23.74 L1846.66 23.95 L1846.96 24.18 L1847.08 24.44 L1847.09 24.72 Z" fill="none" stroke="#037579" stroke-width="1.4" stroke-linejoin="round"/><circle cx="1840" cy="25" r="1.9" fill="none" stroke="#037579" stroke-width="1.3"/></svg>
<svg class="b" style="left:244px;top:70px" width="22" height="20" viewBox="244 70 22 20"><path d="M255.5 72.5 L248.2 80 L255.5 87.5 M248.2 80 H263" fill="none" stroke="#fff" stroke-width="1.6"/></svg>
<svg class="b" style="left:1730px;top:68px" width="30" height="24" viewBox="1730 68 30 24"><path d="M1734.5 80.5 L1742.6 87.6 L1756.6 72.8" fill="none" stroke="#fff" stroke-width="2.4"/></svg>
<svg class="b" style="left:815px;top:282px" width="14" height="14" viewBox="815 282 14 14"><path d="M820 285.3 L827.7 292.8 M827.7 285.3 L820 292.8" stroke="#555" stroke-width="1.1"/></svg>
</body></html>
